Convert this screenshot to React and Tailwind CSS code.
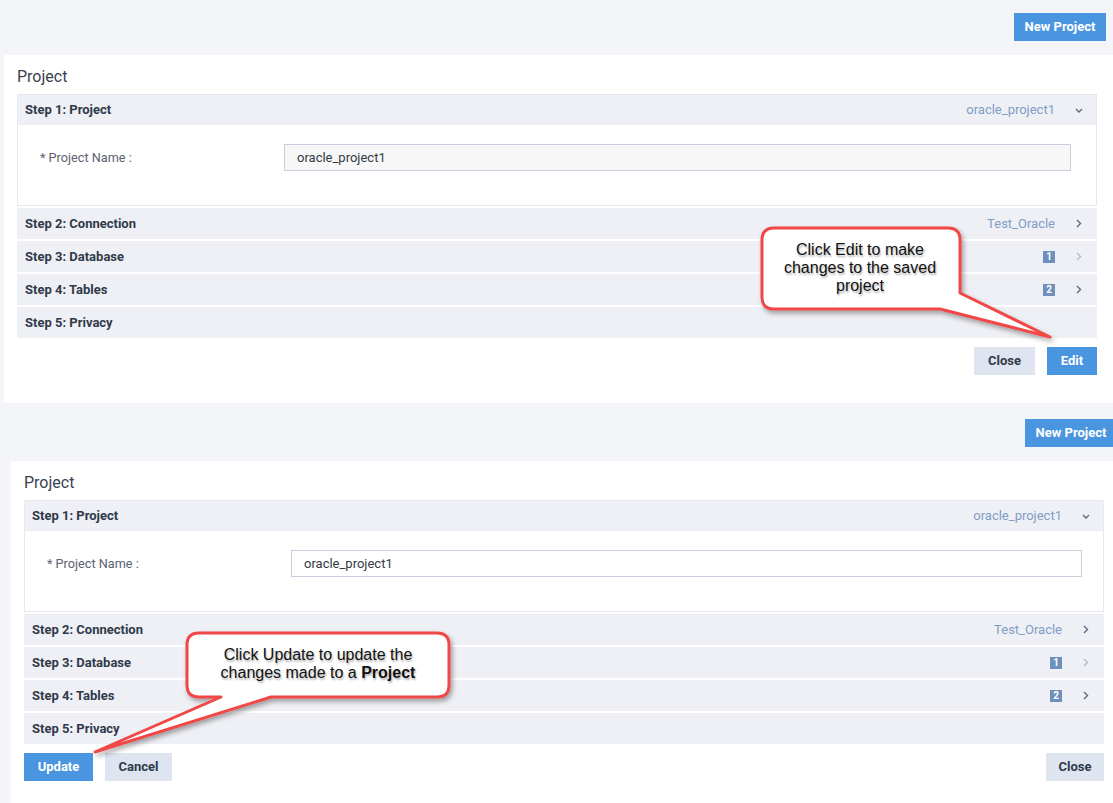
import React from 'react';

const steps = [
    { label: 'Step 2: Connection', value: 'Test_Oracle', chevron: 'dark' },
    { label: 'Step 3: Database', badge: '1', chevron: 'light' },
    { label: 'Step 4: Tables', badge: '2', chevron: 'dark' },
    { label: 'Step 5: Privacy' },
];

function Chevron({ down, light }) {
    const color = light ? '#aebdd0' : '#5d6b80';
    return (
        <span className="w-[16px] flex justify-center items-center">
            {down ? (
                <svg width="8" height="5" viewBox="0 0 8 5">
                    <polyline points="1,1 4,4 7,1" fill="none" stroke={color} strokeWidth="1.4" />
                </svg>
            ) : (
                <svg width="6" height="9" viewBox="0 0 6 9">
                    <polyline points="1,1 4.5,4.5 1,8" fill="none" stroke={color} strokeWidth="1.4" />
                </svg>
            )}
        </span>
    );
}

function Accordion({ editing }) {
    return (
        <div className="flex flex-col gap-[2px]">
            <div className="border border-[#e6e8ef] flex flex-col">
                <div className="h-[30px] bg-[#eff0f5] flex items-center pl-[7px] pr-[9px]">
                    <span className="text-[13px] font-bold text-[#2f3a4a] flex-1">Step 1: Project</span>
                    <span className="text-[13px] text-[#7f9dc6] mr-[16px]">oracle_project1</span>
                    <Chevron down />
                </div>
                <div className="h-[80px] bg-white flex items-start pt-[19px]">
                    <span className="text-[12.7px] text-[#5b6270] pl-[22px] pt-[4px] w-[266px]">* Project Name :</span>
                    <div
                        className={
                            'flex-1 h-[27px] border border-[#c7cfdc] flex items-center pl-[12px] text-[13px] text-[#333a44] ' +
                            (editing ? 'bg-white mr-[21px]' : 'bg-[#f7f7f7] mr-[25px]')
                        }
                    >
                        oracle_project1
                    </div>
                </div>
            </div>
            {steps.map((s) => (
                <div key={s.label} className="h-[31px] bg-[#eff0f5] flex items-center pl-[8px] pr-[10px]">
                    <span className="text-[13px] font-bold text-[#2f3a4a] flex-1">{s.label}</span>
                    {s.value && <span className="text-[13px] text-[#7f9dc6] mr-[16px]">{s.value}</span>}
                    {s.badge && (
                        <span className="w-[12px] h-[12px] bg-[#6f90bd] text-white text-[10px] font-bold leading-[12px] text-center mr-[16px]">
                            {s.badge}
                        </span>
                    )}
                    {s.chevron && <Chevron light={s.chevron === 'light'} />}
                </div>
            ))}
        </div>
    );
}

function NewProjectButton() {
    return (
        <button className="w-[92px] h-[28px] bg-[#4a95e0] text-white text-[13px] font-bold">New Project</button>
    );
}

export default function App() {
    return (
        <div className="relative w-[1113px] h-[803px] overflow-hidden bg-[#f4f5f9] font-['Roboto',sans-serif]">
            {/* first screen: saved project */}
            <div className="h-[405px] flex flex-col">
                <div className="h-[55px] flex justify-end items-start pt-[13px] pr-[7px]">
                    <NewProjectButton />
                </div>
                <div className="ml-[4px] h-[348px] bg-white pl-[13px] pr-[16px] pt-[12px]">
                    <h2 className="text-[16px] leading-[20px] text-[#3a4250] mb-[7px]">Project</h2>
                    <Accordion />
                    <div className="flex justify-end gap-[12px] mt-[9px]">
                        <button className="w-[61px] h-[28px] bg-[#dee4f0] text-[#2f3a4a] text-[13px] font-bold">Close</button>
                        <button className="w-[50px] h-[28px] bg-[#4a95e0] text-white text-[13px] font-bold">Edit</button>
                    </div>
                </div>
            </div>

            {/* second screen: edit mode */}
            <div className="h-[398px] flex flex-col">
                <div className="h-[56px] flex justify-end items-start pt-[14px] -mr-[4px]">
                    <NewProjectButton />
                </div>
                <div className="ml-[11px] flex-1 bg-white pl-[13px] pr-[9px] pt-[12px]">
                    <h2 className="text-[16px] leading-[20px] text-[#3a4250] mb-[7px]">Project</h2>
                    <Accordion editing />
                    <div className="flex items-center gap-[12px] mt-[9px]">
                        <button className="w-[69px] h-[28px] bg-[#4a95e0] text-white text-[13px] font-bold">Update</button>
                        <button className="w-[67px] h-[28px] bg-[#dee4f0] text-[#2f3a4a] text-[13px] font-bold">Cancel</button>
                        <div className="flex-1" />
                        <button className="w-[58px] h-[28px] bg-[#dee4f0] text-[#2f3a4a] text-[13px] font-bold">Close</button>
                    </div>
                </div>
            </div>

            {/* callouts */}
            <svg className="absolute left-0 top-0 pointer-events-none" width="1113" height="803">
                <defs>
                    <filter id="shadow" x="-20%" y="-20%" width="140%" height="160%">
                        <feDropShadow dx="2" dy="3" stdDeviation="2.5" floodColor="#000" floodOpacity="0.35" />
                    </filter>
                </defs>
                <path
                    d="M774 228 H948 Q960 228 960 240 V293 L1050 337 L940 309 H774 Q762 309 762 297 V240 Q762 228 774 228 Z"
                    fill="#fff"
                    stroke="#f04646"
                    strokeWidth="3"
                    strokeLinejoin="round"
                    filter="url(#shadow)"
                />
                <path
                    d="M199 633 H437 Q449 633 449 645 V685 Q449 697 437 697 H271 L95 752 L221 697 H199 Q187 697 187 685 V645 Q187 633 199 633 Z"
                    fill="#fff"
                    stroke="#f04646"
                    strokeWidth="3"
                    strokeLinejoin="round"
                    filter="url(#shadow)"
                />
            </svg>
            <div className="absolute left-[760px] top-[241px] w-[200px] text-center text-[16px] leading-[18px] text-[#111] font-['Liberation_Sans',Arial,sans-serif] [text-shadow:1px_2px_2px_rgba(0,0,0,0.3)]">
                Click Edit to make
                <br />
                changes to the saved
                <br />
                project
            </div>
            <div className="absolute left-[187px] top-[646px] w-[262px] text-center text-[16px] leading-[18px] text-[#111] font-['Liberation_Sans',Arial,sans-serif] [text-shadow:1px_2px_2px_rgba(0,0,0,0.3)]">
                Click Update to update the
                <br />
                changes made to a <b>Project</b>
            </div>
        </div>
    );
}
